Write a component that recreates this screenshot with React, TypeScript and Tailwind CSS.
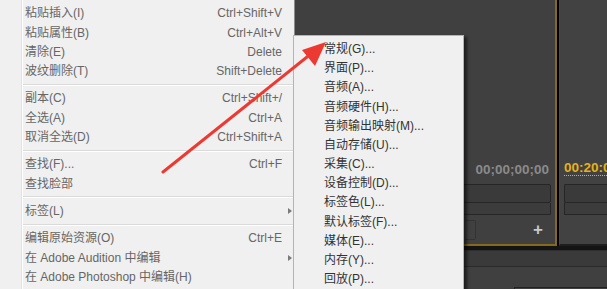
import React from 'react';

type Item = { label: string; shortcut?: string; sub?: boolean } | 'sep';

const mainItems: Item[] = [
  { label: '粘贴插入(I)', shortcut: 'Ctrl+Shift+V' },
  { label: '粘贴属性(B)', shortcut: 'Ctrl+Alt+V' },
  { label: '清除(E)', shortcut: 'Delete' },
  { label: '波纹删除(T)', shortcut: 'Shift+Delete' },
  'sep',
  { label: '副本(C)', shortcut: 'Ctrl+Shift+/' },
  { label: '全选(A)', shortcut: 'Ctrl+A' },
  { label: '取消全选(D)', shortcut: 'Ctrl+Shift+A' },
  'sep',
  { label: '查找(F)...', shortcut: 'Ctrl+F' },
  { label: '查找脸部' },
  'sep',
  { label: '标签(L)', sub: true },
  'sep',
  { label: '编辑原始资源(O)', shortcut: 'Ctrl+E' },
  { label: '在 Adobe Audition 中编辑', sub: true },
  { label: '在 Adobe Photoshop 中编辑(H)' },
];

const prefItems = [
  '常规(G)...',
  '界面(P)...',
  '音频(A)...',
  '音频硬件(H)...',
  '音频输出映射(M)...',
  '自动存储(U)...',
  '采集(C)...',
  '设备控制(D)...',
  '标签色(L)...',
  '默认标签(F)...',
  '媒体(E)...',
  '内存(Y)...',
  '回放(P)...',
];

const font = { fontFamily: '"Liberation Sans", "Noto Sans CJK SC", sans-serif' };

function MainMenu() {
  return (
    <div
      className="absolute left-0 top-[-4px] w-[295px] h-[300px] bg-[#f0f0f0] border-r border-[#8c8c8c] flex text-[12px] text-[#666666]"
      style={font}
    >
      {/* icon gutter */}
      <div className="w-[22px] shrink-0 border-r border-[#e2e2e2]" />
      <div className="flex-1 flex flex-col pt-[7.65px] border-l border-white">
        {mainItems.map((it, i) =>
          it === 'sep' ? (
            <div key={i} className="h-[8px] flex flex-col justify-center">
              <div className="h-px bg-[#dadada]" />
              <div className="h-px bg-white" />
            </div>
          ) : (
            <div key={i} className="h-[19.3px] flex items-center pl-[2px] whitespace-nowrap">
              <span className="flex-1">{it.label}</span>
              {it.shortcut && <span>{it.shortcut}</span>}
              <span className="w-[12px] flex justify-center">
                {it.sub && (
                  <span className="block w-0 h-0 border-y-[3.5px] border-y-transparent border-l-[4px] border-l-[#7a7a7a] ml-[4px]" />
                )}
              </span>
            </div>
          )
        )}
      </div>
    </div>
  );
}

function PrefMenu() {
  return (
    <div
      className="absolute left-[293px] top-[35px] w-[171px] h-[270px] bg-[#f0f0f0] border border-[#b4b4b4] shadow-[3px_2px_3px_rgba(0,0,0,0.55)] pt-[3.4px] text-[12px] text-[#333333]"
      style={font}
    >
      {prefItems.map((p) => (
        <div key={p} className="h-[19.2px] flex items-center pl-[30px] whitespace-nowrap">
          {p}
        </div>
      ))}
    </div>
  );
}

function Workspace() {
  return (
    <div className="w-full h-full flex flex-col bg-[#404040]" style={font}>
      <div className="h-[246px] flex">
        {/* source monitor */}
        <div className="flex-1 border-r-2 border-b-2 border-[#86691c] flex flex-col justify-end">
          <div className="text-right pr-[6px] text-[13.5px] font-bold text-[#8a8a8a] leading-none mb-[8px]">
            00;00;00;00
          </div>
          <div className="mr-[4px] flex flex-col">
            <div className="h-[19px] border border-[#262626] bg-[#3a3a3a] rounded-[2px]" />
            <div className="h-[12px] border border-t-0 border-[#262626] bg-[#3c3c3c] rounded-b-[2px]" />
          </div>
          <div className="h-[29px] flex items-center justify-between pl-[465px] pr-[12px]">
            <div className="w-[11px] h-[20px] border border-[#333] border-l-0 rounded-r-[2px]" />
            <span className="text-[#c8c8c8] text-[17px] font-bold leading-none">+</span>
          </div>
        </div>
        <div className="w-[2px] bg-black" />
        {/* program monitor */}
        <div className="w-[48px] bg-[#424242] border-l border-[#4a4a4a] border-b-2 border-b-[#1e1e1e] flex flex-col justify-end pl-[4px]">
          <div className="text-[13.5px] font-bold text-[#e6b11c] leading-none mb-[8px] whitespace-nowrap border-b border-dotted border-[#e6b11c] w-fit pb-[1px]">
            00:20:0
          </div>
          <div className="flex flex-col">
            <div className="h-[19px] border border-[#262626] bg-[#3a3a3a] border-r-0 rounded-l-[2px]" />
            <div className="h-[12px] border border-t-0 border-[#262626] bg-[#3c3c3c] border-r-0" />
          </div>
          <div className="h-[29px]" />
        </div>
      </div>
      <div className="h-[4px] bg-[#141414]" />
      <div className="h-[16px] bg-[#3a3a3a] border-t border-[#2e2e2e]" />
      <div className="h-px bg-[#2a2a2a]" />
      <div className="flex-1 bg-[#404040] flex items-end pl-[514px]">
        <div className="w-full h-[2px] border-t border-l border-[#222]" />
      </div>
    </div>
  );
}

export default function App() {
  return (
    <div className="relative w-[607px] h-[289px] overflow-hidden bg-[#404040]">
      <Workspace />
      <MainMenu />
      <PrefMenu />
      {/* red annotation arrow */}
      <svg className="absolute inset-0 pointer-events-none" width="607" height="289" viewBox="0 0 607 289">
        <line x1="163" y1="172" x2="312" y2="53" stroke="#ec3a33" strokeWidth="3" strokeLinecap="round" />
        <polygon points="326,42 302,50 315,66" fill="#ec3a33" />
      </svg>
    </div>
  );
}
